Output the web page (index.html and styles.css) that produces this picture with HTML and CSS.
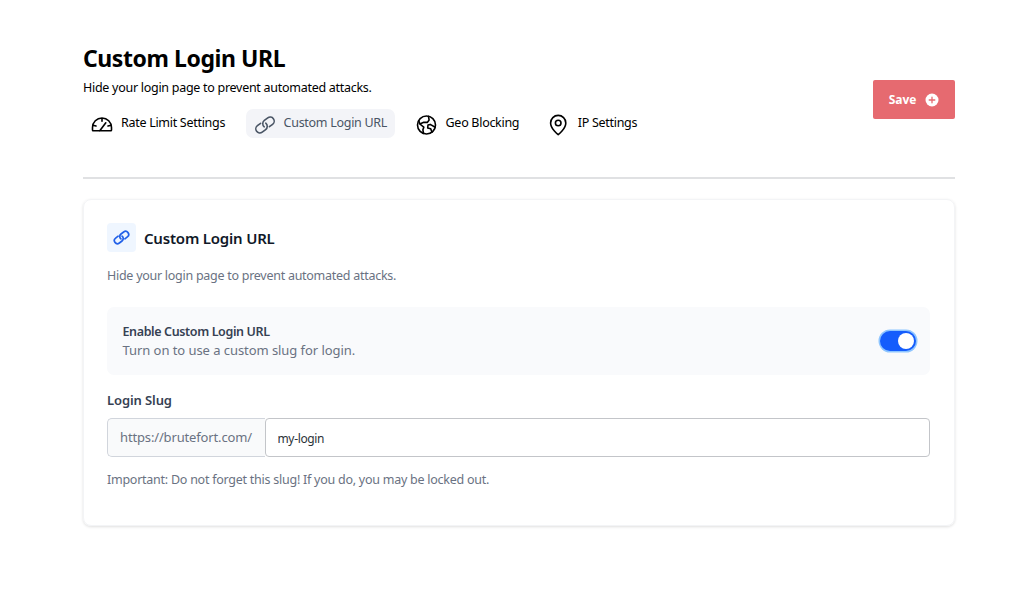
FILE: index.html
```html
<!DOCTYPE html>
<html lang="en">
<head>
<meta charset="UTF-8">
<meta name="viewport" content="width=device-width,initial-scale=1.0">
<title>Custom Login URL</title>
<link rel="stylesheet" href="styles.css">
</head>
<body>

<svg class="sprite" aria-hidden="true">
  <symbol id="icon-link" viewBox="0 0 22 22">
    <g transform="translate(11 11) rotate(-37)">
      <path d="M-2.500 -4H-6.500a4 4 0 0 0 0 8H-2.200a4 4 0 0 0 3.900-5"/>
      <path d="M2.500 4H6.500a4 4 0 0 0 0-8H2.200a4 4 0 0 0-3.900 5"/>
    </g>
  </symbol>
</svg>

<div class="wrap">
  <header class="header">
    <div class="header-main">
      <h1 class="title">Custom Login URL</h1>
      <p class="subtitle">Hide your login page to prevent automated attacks.</p>
      <nav class="tabs">
        <a class="tab" href="#rate-limit">
          <svg class="tab-icon" viewBox="0 0 22 22"><path d="M1.500 15.500V13.500a9.500 9.500 0 0 1 19 0V16.100a.7.7 0 0 1-.7.7H2.200a.7.7 0 0 1-.7-.7zM11 4v3.200M2 11.200l3 .8M20 11.200l-3 .8M8.800 16.800l6-8"/></svg>
          <span class="tab-text">Rate Limit Settings</span>
        </a>
        <a class="tab active" href="#login-url">
          <svg class="tab-icon"><use href="#icon-link"/></svg>
          <span class="tab-text">Custom Login URL</span>
        </a>
        <a class="tab" href="#geo">
          <svg class="tab-icon" viewBox="0 0 22 22"><circle cx="10.500" cy="11" r="9"/><path d="M2.800 6.800l1 3.200 4 3.200-.9 2.600.6 3.700M3.800 10l4-1.800 3.500.2 1.800-2.300-.6-3.700M19.200 13.200l-5-2.800-2.200.6-.3 3 3 .8 1.300 3.400"/></svg>
          <span class="tab-text">Geo Blocking</span>
        </a>
        <a class="tab" href="#ip">
          <svg class="tab-icon" viewBox="0 0 22 22"><circle cx="10.200" cy="9" r="2.800"/><path d="M17.800 9c0 6-7.600 11.600-7.600 11.600S2.600 15 2.600 9a7.600 7.600 0 0 1 15.200 0z"/></svg>
          <span class="tab-text">IP Settings</span>
        </a>
      </nav>
    </div>
    <button class="save" type="button">
      <span>Save</span>
      <svg class="save-icon" viewBox="0 0 14 14"><circle cx="7" cy="7" r="6.500"/><path d="M7 4.200v5.600M4.200 7h5.600"/></svg>
    </button>
  </header>

  <section class="card">
    <div class="card-head">
      <span class="card-icon"><svg><use href="#icon-link"/></svg></span>
      <h2 class="card-title">Custom Login URL</h2>
    </div>
    <p class="card-desc">Hide your login page to prevent automated attacks.</p>

    <div class="option">
      <div>
        <div class="option-title">Enable Custom Login URL</div>
        <div class="option-desc">Turn on to use a custom slug for login.</div>
      </div>
      <span class="toggle" role="switch" aria-checked="true" aria-label="Enable Custom Login URL" tabindex="0"></span>
    </div>

    <label class="label" for="slug">Login Slug</label>
    <div class="field">
      <span class="prefix">https://brutefort.com/</span>
      <input class="input" id="slug" type="text" value="my-login">
    </div>
    <p class="note">Important: Do not forget this slug! If you do, you may be locked out.</p>
  </section>
</div>

</body>
</html>
```
FILE: styles.css
```css
*{ margin: 0; padding: 0; box-sizing: border-box; }
body{ background: #fff; color: #000; font: 13px/20px "Noto Sans", "Open Sans", sans-serif; }
a{ text-decoration: none; color: inherit; }
svg{ fill: none; stroke: currentColor; stroke-linecap: round; stroke-linejoin: round; }
.sprite{ display: none; }
.wrap{ width: 872px; margin-left: 83px; padding: 42px 0 60px; }

/* header */
.header{ display: flex; justify-content: space-between; height: 137px; border-bottom: 2px solid #e0e1e3; }
.title{ font-size: 23px; line-height: 32px; font-weight: 700; letter-spacing: -.43px; white-space: nowrap; }
.subtitle{ margin-top: 3px; line-height: 21px; font-size: 12.500px; letter-spacing: -.28px; }
.tabs{ display: flex; margin-top: 11px; }
.tab{ display: flex; height: 29px; padding: 0 8px; margin-right: 12.500px; border-radius: 7px; }
.tab.active{ background: #f3f4f8; color: #4a5565; }
.tab-icon{ width: 22px; height: 22px; margin: 4.500px 8px 0 0; stroke-width: 1.600; }
.tab-text{ line-height: 27px; font-size: 12.500px; letter-spacing: -.29px; white-space: nowrap; }
.save{
  display: flex; align-items: center; justify-content: center; gap: 9px;
  width: 82px; height: 39px; margin-top: 38px; border: 0; border-radius: 2px;
  background: #e66a70; color: #fff; font: 700 12px/20px "Open Sans", sans-serif; letter-spacing: -.1px;
}
.save-icon{ width: 14px; height: 14px; }
.save-icon circle{ fill: #fff; stroke: none; }
.save-icon path{ stroke: #e66a70; stroke-width: 1.300; }

/* card */
.card{
  height: 327px; margin-top: 20px; padding: 23px 24px 0 23px;
  border: 1px solid #f3f4f6; border-radius: 8px; box-shadow: 0 1px 3px rgba(0,0,0,.13);
}
.card-head{ display: flex; align-items: center; gap: 8px; }
.card-icon{ display: flex; align-items: center; justify-content: center; width: 29px; height: 29px; border-radius: 4px; background: #eff6ff; color: #2160e8; }
.card-icon svg{ width: 17px; height: 17px; stroke-width: 2.200; }
.card-title{ font-size: 15px; line-height: 24px; font-weight: 600; letter-spacing: -.2px; color: #101828; }
.card-desc{ margin-top: 14px; color: #6a7282; font-size: 12.500px; letter-spacing: -.27px; }
.option{
  display: flex; align-items: center; justify-content: space-between;
  height: 68px; margin-top: 21px; padding: 0 14px 0 15.500px; border-radius: 7px; background: #f9fafc;
}
.option-title{ line-height: 19px; font-weight: 600; font-size: 12.500px; letter-spacing: -.37px; color: #364153; }
.option-desc{ line-height: 19px; letter-spacing: -.06px; color: #6a7282; }
.toggle{ width: 36px; height: 20px; border-radius: 12px; background: #155dfc; box-shadow: 0 0 0 1.500px #8ec5ff; padding: 2px; display: flex; justify-content: flex-end; }
.toggle:after{ content: ""; width: 16px; height: 16px; border-radius: 50%; background: #fff; }
.label{ display: block; margin-top: 15px; line-height: 20px; font-weight: 600; letter-spacing: -.1px; color: #364153; }
.field{ display: flex; height: 39px; margin-top: 8px; }
.prefix{ width: 158px; padding-left: 12px; line-height: 37px; letter-spacing: -.15px; color: #6a7282; background: #f9fafb; border: 1px solid #d1d5dc; border-right: 0; border-radius: 5px 0 0 5px; }
.input{ flex: 1; min-width: 0; padding: 2px 11.500px 0; border: 1px solid #c3c5c9; border-radius: 4px; font: inherit; font-size: 12px; letter-spacing: -.35px; color: #2c3338; background: #fff; outline: 0; }
.note{ margin-top: 13px; color: #6a7282; font-size: 12.500px; letter-spacing: -.25px; }
```
